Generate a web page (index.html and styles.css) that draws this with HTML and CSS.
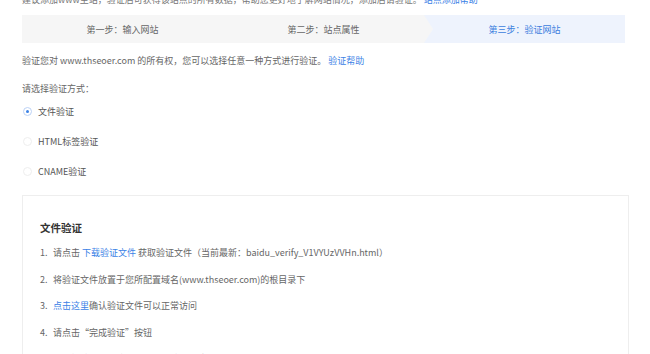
FILE: index.html
```html
<!DOCTYPE html>
<html lang="zh-CN">

<head>
    <meta charset="UTF-8">
    <title>添加网站 - 验证网站</title>
    <link rel="stylesheet" href="styles.css">
</head>

<body>
    <div class="page">
        <p class="intro">建议添加www主站，验证后可获得该站点的所有数据，帮助您更好地了解网站情况，添加后请验证。 <a href="#">站点添加帮助</a></p>

        <div class="steps">
            <div class="step">第一步：输入网站</div>
            <div class="step">第二步：站点属性</div>
            <div class="step active">第三步：验证网站</div>
        </div>

        <p class="desc">验证您对 www.thseoer.com 的所有权，您可以选择任意一种方式进行验证。 <a href="#">验证帮助</a></p>
        <p class="label">请选择验证方式：</p>

        <div class="methods">
            <label class="method"><span class="radio checked"></span>文件验证</label>
            <label class="method"><span class="radio"></span>HTML标签验证</label>
            <label class="method"><span class="radio"></span>CNAME验证</label>
        </div>

        <div class="box">
            <h3>文件验证</h3>
            <ol class="steps-list">
                <li><span class="num">1.</span>请点击 <a href="#">下载验证文件</a> 获取验证文件（当前最新：baidu_verify_V1VYUzVVHn.html）</li>
                <li><span class="num">2.</span>将验证文件放置于您所配置域名(www.thseoer.com)的根目录下</li>
                <li><span class="num">3.</span><a href="#">点击这里</a>确认验证文件可以正常访问</li>
                <li><span class="num">4.</span>请点击“完成验证”按钮</li>
                <li><span class="num">5.</span>为保持验证通过的状态，成功验证后请不要删除HTML文件</li>
            </ol>
        </div>
    </div>
</body>

</html>
```

FILE: styles.css
```css
body {
    font-family: "Noto Sans CJK SC", "Liberation Sans", sans-serif;
    margin: 0;
    padding: 0;
    background-color: #fff;
    color: #666;
    font-size: 9px;
    overflow: hidden;
}

a {
    color: #3b82e6;
    text-decoration: none;
}

.page {
    padding: 0 20px 0 22px;
    margin-top: -6px;
}

.intro {
    margin: 0;
    height: 12px;
    line-height: 12px;
    color: #777;
}

.steps {
    display: flex;
    margin-top: 9px;
    height: 28px;
    background-color: #f6f6f6;
    width: 603px;
}

.step {
    flex: 1;
    display: flex;
    justify-content: center;
    align-items: center;
    color: #666;
}

.step.active {
    background-color: #eef3fd;
    color: #3b7ddd;
    clip-path: polygon(0 0, 100% 0, 100% 100%, 0 100%, 9px 50%);
}

.desc {
    margin: 12px 0 0;
    line-height: 12px;
}

.label {
    margin: 16px 0 0;
    line-height: 12px;
}

.methods {
    display: flex;
    flex-direction: column;
    gap: 18px;
    margin-top: 10px;
}

.method {
    display: flex;
    align-items: center;
    height: 12px;
    color: #555;
}

.radio {
    width: 7px;
    height: 7px;
    border: 1px solid #eee;
    border-radius: 50%;
    margin: 0 6px 0 1px;
    position: relative;
}

.radio.checked {
    border-color: #bcd2f6;
}

.radio.checked::after {
    content: "";
    position: absolute;
    left: 2px;
    top: 2px;
    width: 3px;
    height: 3px;
    border-radius: 50%;
    background-color: #3b82e6;
}

.box {
    margin-top: 18px;
    width: 588px;
    border: 1px solid #eee;
    padding: 24px 0 0 17px;
    height: 200px;
}

.box h3 {
    margin: 0;
    font-size: 10.5px;
    color: #333;
    line-height: 16px;
}

.steps-list {
    list-style: none;
    margin: 11px 0 0;
    padding: 0;
    display: flex;
    flex-direction: column;
    gap: 14.5px;
}

.steps-list li {
    line-height: 12px;
    color: #666;
}

.num {
    display: inline-block;
    width: 13px;
}
```
